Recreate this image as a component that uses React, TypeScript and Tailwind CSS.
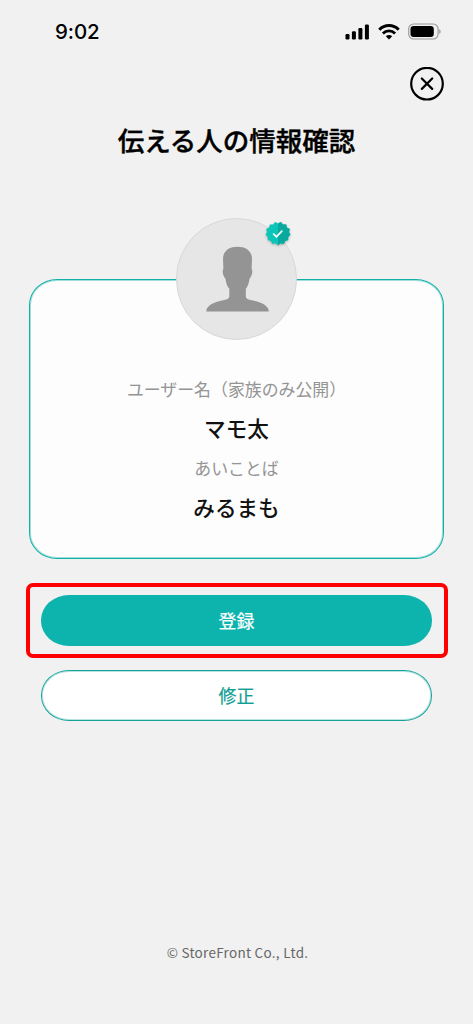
import { useState } from "react";

const fields = [
  { label: "ユーザー名（家族のみ公開）", value: "マモ太" },
  { label: "あいことば", value: "みるまも" },
];

function StatusBar() {
  return (
    <div className="flex h-[63px] items-center justify-between pl-[55px] pr-[31px]">
      <span className="mt-px font-['Inter'] text-[20.5px] font-medium leading-none tracking-[-0.1px] text-black">
        9:02
      </span>
      <div className="flex items-center">
        <svg width="25" height="16" viewBox="0 0 25 16" fill="#000">
          <rect x="0.5" y="10" width="4" height="5.5" rx="1.2" />
          <rect x="6.9" y="7.2" width="4" height="8.3" rx="1.2" />
          <rect x="13.4" y="4" width="4" height="11.5" rx="1.2" />
          <rect x="19.9" y="0.5" width="4" height="15" rx="1.2" />
        </svg>
        <svg className="ml-[8px]" width="22" height="16" viewBox="0 0 22 16" fill="none" stroke="#000">
          <path d="M1.3 5.7C6.7 0.1 15.3 0.1 20.7 5.7" strokeWidth="3" />
          <path d="M4.9 9.5C8.3 6 13.7 6 17.1 9.5" strokeWidth="2.8" />
          <path d="M7.8 12.3C9.6 10.5 12.4 10.5 14.2 12.3L11 15.5Z" fill="#000" stroke="none" />
        </svg>
        <svg className="ml-[8px]" width="34" height="17" viewBox="0 0 34 17">
          <rect x="0.7" y="1" width="29.4" height="15" rx="5" fill="none" stroke="#979797" strokeWidth="1.1" />
          <rect x="2.5" y="3" width="23.3" height="11" rx="3.2" fill="#000" />
          <path d="M31.3 6.2C33 6.8 33 10.2 31.3 10.8Z" fill="#8c8c8c" />
        </svg>
      </div>
    </div>
  );
}

function VerifiedBadge() {
  return (
    <svg
      className="absolute right-0 top-[1px] overflow-visible drop-shadow-[0_1px_1px_rgba(0,0,0,0.25)]"
      width="36"
      height="28"
      viewBox="0 0 36 28"
    >
      <path
        d="M18 3.4L20.9 1.9L22.9 4.6L26.2 4.4L26.8 7.6L29.8 8.9L29 12L30.4 14.7L28.2 17L28.2 20.1L25.2 20.9L23.7 24L20.7 23.2L18 25.2L15.3 23.2L12.3 24L10.8 20.9L7.8 20.1L7.8 17L5.6 14.7L7 12L6.2 8.9L9.2 7.6L9.8 4.4L13.1 4.6L15.1 1.9Z"
        fill="#0bc5b8"
      />
      <path
        d="M18 3.4L20.9 1.9L22.9 4.6L26.2 4.4L26.8 7.6L29.8 8.9L29 12L30.4 14.7L28.2 17L28.2 20.1L25.2 20.9L23.7 24L20.7 23.2L18 25.2Z"
        fill="#0aa99e"
      />
      <path d="M13.2 13.7L16.5 16.9L22.3 10.6" fill="none" stroke="#fff" strokeWidth="1.7" />
    </svg>
  );
}

function Avatar() {
  return (
    <div className="relative -mt-[62px] flex h-[122px] w-[121px] justify-center rounded-full border border-[#d8d8d8] bg-[#e6e6e6]">
      <svg className="mt-[27px] ml-[2px]" width="63" height="66" viewBox="0 0 63 66" fill="#949494">
        <path d="M31.5 0.8C40 0.8 46 5 46 13L45.6 23C47.4 24.5 45.5 31.5 43.6 32.5C43 36.5 42 40.5 39.8 42.8V50.5C40 53.5 44 53.8 49 55C57 56.8 62.8 60.5 62.8 65.4H0.3C0.3 60.5 6 56.8 14 55C19 53.8 23 53.5 23.3 50.5V42.8C21 40.5 20 36.5 19.4 32.5C17.5 31.5 15.6 24.5 17.4 23L17 13C17 5 23 0.8 31.5 0.8Z" />
      </svg>
      <VerifiedBadge />
    </div>
  );
}

export default function App() {
  const [isOpen, setIsOpen] = useState<boolean>(true);

  return (
    <div className="flex h-[1024px] w-[473px] flex-col overflow-hidden bg-[#f1f1f1] font-['Noto_Sans_CJK_JP',sans-serif]">
      <StatusBar />
      <div className="flex h-[41px] items-center justify-end pr-[29px]">
        <button aria-label="閉じる" onClick={() => setIsOpen(!isOpen)} className="cursor-pointer">
          <svg width="34" height="34" viewBox="0 0 34 34" fill="none" stroke="#000" strokeWidth="2.2">
            <circle cx="17" cy="16.7" r="15.8" />
            <path d="M11.8 11.5L22.2 21.9M22.2 11.5L11.8 21.9" strokeLinecap="round" />
          </svg>
        </button>
      </div>

      <h1 className="mt-[16px] text-center text-[26.5px] font-medium leading-[40px] text-black [-webkit-text-stroke:0.4px_#000]">
        伝える人の情報確認
      </h1>

      <section className="mx-[29px] mt-[119px] flex h-[280px] flex-col items-center rounded-[28px/26px] border border-[#13b0a8] bg-[#fdfdfd] shadow-[inset_0_0_0_1px_rgba(19,176,168,0.4)]">
        <Avatar />
        <dl className="mt-[36px] text-center">
          {fields.map((field) => (
            <div key={field.label}>
              <dt className="text-[16.9px] leading-[26px] text-[#949494]">{field.label}</dt>
              <dd className="mb-[11px] mt-[10px] text-[21.6px] font-medium leading-[32px] text-[#111]">
                {field.value}
              </dd>
            </div>
          ))}
        </dl>
      </section>

      <div className="ml-[26px] mr-[25px] mt-[24px] h-[75px] rounded-[7px] border-4 border-[#fe0000] pb-[8px] pl-[11px] pr-[12px] pt-[8px]">
        <button className="h-[51px] w-full cursor-pointer rounded-[28px/25px] bg-[#0db4ae] pb-px text-[17.9px] text-white [-webkit-text-stroke:0.2px_#fff]">
          登録
        </button>
      </div>
      <button className="mx-[41px] mt-[12px] h-[51px] cursor-pointer rounded-[28px/25px] border border-[#16a39a] bg-white text-[17.9px] text-[#109e94] shadow-[inset_0_0_0_1px_rgba(22,163,154,0.3)] [-webkit-text-stroke:0.2px_#109e94]">
        修正
      </button>

      <footer className="mt-auto pb-[62px] pl-[2px] text-center text-[13.5px] leading-[20px] tracking-[0.28px] text-[#666]">
        © StoreFront Co., Ltd.
      </footer>
    </div>
  );
}
